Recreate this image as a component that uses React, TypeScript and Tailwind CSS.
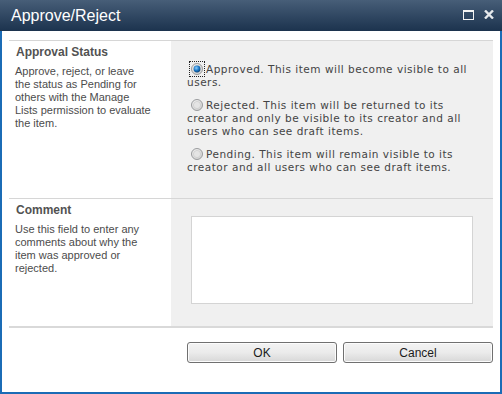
import React from "react";

const Radio = ({ checked }: { checked?: boolean }) => (
  <span
    className={
      "relative inline-flex items-center justify-center align-[-2px] mr-[3px] ml-[4px] " +
      (checked ? "outline-1 outline-dotted outline-[#222] outline-offset-[1px]" : "")
    }
  >
    <svg width="12" height="12" viewBox="0 0 12 12">
      <defs>
        <radialGradient id="rg-off" cx="40%" cy="35%" r="70%">
          <stop offset="0%" stopColor="#fbfbfb" />
          <stop offset="100%" stopColor="#cfcfcf" />
        </radialGradient>
        <radialGradient id="rg-on" cx="40%" cy="35%" r="70%">
          <stop offset="0%" stopColor="#8fd0ff" />
          <stop offset="55%" stopColor="#1a78c8" />
          <stop offset="100%" stopColor="#0a3d6e" />
        </radialGradient>
      </defs>
      <circle cx="6" cy="6" r="5.5" fill="url(#rg-off)" stroke="#9a9c9e" strokeWidth="1" />
      <circle cx="6" cy="6" r="3.6" fill="#e4e4e4" stroke="#c4c4c4" strokeWidth="0.6" />
      {checked && <circle cx="6" cy="6" r="3.4" fill="url(#rg-on)" />}
    </svg>
  </span>
);

const Option = ({ checked, lines }: { checked?: boolean; lines: string[] }) => (
  <div className="leading-[13px]">
    <Radio checked={checked} />
    {lines.map((l, i) => (
      <React.Fragment key={i}>
        {i > 0 && <br />}
        {l}
      </React.Fragment>
    ))}
  </div>
);

const Button = ({ label }: { label: string }) => (
  <button className="w-[150px] h-[21px] rounded-[3px] border border-[#707070] bg-gradient-to-b from-[#f3f3f3] via-[#ebebeb] to-[#d7d7d7] text-[12px] text-[#1b1b1b] leading-none shadow-[inset_0_0_0_1px_#fcfcfc]">
    {label}
  </button>
);

export default function App() {
  return (
    <div className="w-[502px] h-[394px] flex flex-col bg-white font-['Liberation_Sans',Arial,sans-serif]">
      <div className="h-[31px] shrink-0 flex items-center justify-between pl-[11px] pr-[8px] bg-gradient-to-b from-[#475e78] to-[#1c334e]">
        <span className="text-[16px] text-white">Approve/Reject</span>
        <div className="flex items-center gap-[10px] pb-[2px]">
          <svg width="11" height="10" viewBox="0 0 11 10">
            <rect x="0.5" y="0.5" width="10" height="9" fill="none" stroke="#f4f4f4" strokeWidth="1" />
            <rect x="0" y="0" width="11" height="2" fill="#f4f4f4" />
          </svg>
          <svg width="10" height="9" viewBox="0 0 10 9">
            <path d="M1 0.5 L9 8.5 M9 0.5 L1 8.5" stroke="#e6e9ec" strokeWidth="2.4" />
          </svg>
        </div>
      </div>

      <div className="flex-1 flex flex-col border-x-2 border-b-2 border-[#1b6cb6] px-[7px] pt-[9px]">
        <div className="border-t border-[#d6d6d6] grid grid-cols-[162px_1fr]">
          <div className="h-[157px] pl-[6px] pt-[5px] text-[11px] leading-[13px] text-[#4c4c4c]">
            <div className="font-bold text-[12px] text-[#525252] pl-[1px] mb-[6px]">Approval Status</div>
            <p>
              Approve, reject, or leave
              <br />
              the status as Pending for
              <br />
              others with the Manage
              <br />
              Lists permission to evaluate
              <br />
              the item.
            </p>
          </div>
          <div className="bg-[#f0f0f0] pl-[16px] pt-[22px] flex flex-col gap-[10px] text-[10.5px] tracking-[0.5px] text-[#444] font-['DejaVu_Sans',Verdana,sans-serif]">
            <Option checked lines={["Approved. This item will become visible to all", "users."]} />
            <Option
              lines={[
                "Rejected. This item will be returned to its",
                "creator and only be visible to its creator and all",
                "users who can see draft items.",
              ]}
            />
            <Option
              lines={[
                "Pending. This item will remain visible to its",
                "creator and all users who can see draft items.",
              ]}
            />
          </div>
        </div>

        <div className="border-t border-[#d6d6d6] grid grid-cols-[162px_1fr]">
          <div className="h-[127px] pl-[6px] pt-[5px] text-[11px] leading-[13px] text-[#4c4c4c]">
            <div className="font-bold text-[12px] text-[#525252] pl-[1px] mb-[6px]">Comment</div>
            <p>
              Use this field to enter any
              <br />
              comments about why the
              <br />
              item was approved or
              <br />
              rejected.
            </p>
          </div>
          <div className="bg-[#f0f0f0] pl-[20px] pt-[17px]">
            <textarea className="w-[282px] h-[88px] resize-none bg-white border border-[#d4d4d4] outline-none" />
          </div>
        </div>

        <div className="border-t-2 border-[#d9d9d9] flex justify-end gap-[6px] pt-[14px]">
          <Button label="OK" />
          <Button label="Cancel" />
        </div>
      </div>
    </div>
  );
}
